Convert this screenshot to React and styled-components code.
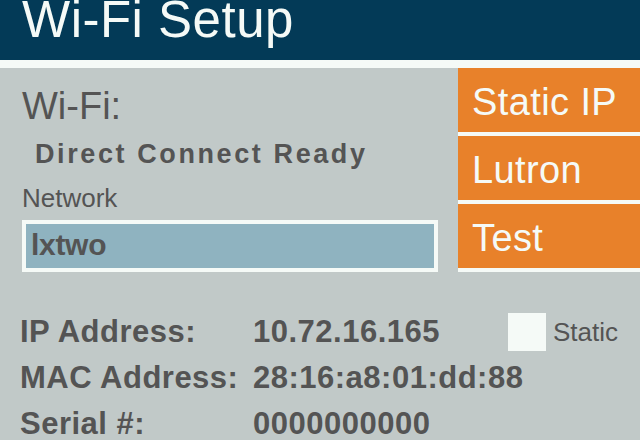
import React from "react";
import styled, { createGlobalStyle } from "styled-components";

const Global = createGlobalStyle`
  html, body { margin: 0; padding: 0; background: #c1c9c8; }
  body { font-family: "Liberation Sans", Arial, sans-serif; }
  * { box-sizing: border-box; }
`;

const Screen = styled.div`
  width: 640px;
  height: 440px;
  overflow: hidden;
  background: #c1c9c8;
  display: flex;
  flex-direction: column;
  color: #545454;
`;

const Header = styled.header`
  height: 68px;
  flex: none;
  background: #033a57;
  border-bottom: 8px solid #f5faf7;
  padding-left: 22px;
`;

const Title = styled.h1`
  margin: 0;
  font-size: 51px;
  font-weight: 400;
  line-height: 40px;
  letter-spacing: 0.5px;
  color: #f5faf7;
`;

const Top = styled.div`
  display: flex;
  height: 204px;
  flex: none;
`;

const LeftPanel = styled.section`
  width: 458px;
  padding-left: 22px;
  display: flex;
  flex-direction: column;
  align-items: flex-start;
`;

const StatusLabel = styled.div`
  margin-top: 18px;
  font-size: 38px;
  line-height: 40px;
`;

const StatusValue = styled.div`
  margin-top: 13px;
  margin-left: 13px;
  font-size: 27px;
  font-weight: 700;
  line-height: 30px;
  letter-spacing: 2.6px;
`;

const FieldLabel = styled.div`
  margin-top: 14px;
  font-size: 26px;
  line-height: 30px;
`;

const Field = styled.div`
  margin-top: 7px;
  width: 416px;
  height: 52px;
  border: 4px solid #f5faf7;
  background: #8fb3c0;
  padding-left: 5px;
  font-size: 30px;
  font-weight: 700;
  line-height: 42px;
  letter-spacing: -0.3px;
`;

const SideMenu = styled.nav`
  width: 182px;
  display: flex;
  flex-direction: column;
`;

const MenuButton = styled.div`
  height: 68px;
  background: #e8812a;
  border-bottom: 4px solid #f5faf7;
  padding: 4px 0 0 14px;
  color: #f5faf7;
  font-size: 38px;
  line-height: 60px;
  letter-spacing: 0.4px;
  white-space: nowrap;
`;

const Info = styled.section`
  padding: 37px 0 0 20px;
  display: grid;
  grid-template-columns: 233px 255px auto;
  grid-auto-rows: 46px;
  align-items: center;
`;

const InfoText = styled.div`
  font-size: 31px;
  font-weight: 700;
  line-height: 32px;
  letter-spacing: 0.5px;
  white-space: nowrap;
`;

const CheckGroup = styled.label`
  display: flex;
  align-items: center;
  gap: 7px;
`;

const CheckBox = styled.span`
  width: 38px;
  height: 38px;
  background: #f5faf7;
`;

const CheckText = styled.span`
  font-size: 26px;
  line-height: 30px;
`;

const rows = [
  ["IP Address:", "10.72.16.165", true],
  ["MAC Address:", "28:16:a8:01:dd:88", false],
  ["Serial #:", "0000000000", false],
];

export default function App() {
  return (
    <>
      <Global />
      <Screen>
        <Header>
          <Title>Wi-Fi Setup</Title>
        </Header>
        <Top>
          <LeftPanel>
            <StatusLabel>Wi-Fi:</StatusLabel>
            <StatusValue>Direct Connect Ready</StatusValue>
            <FieldLabel>Network</FieldLabel>
            <Field>lxtwo</Field>
          </LeftPanel>
          <SideMenu>
            <MenuButton>Static IP</MenuButton>
            <MenuButton>Lutron</MenuButton>
            <MenuButton>Test</MenuButton>
          </SideMenu>
        </Top>
        <Info>
          {rows.map(([label, value, check]) => (
            <React.Fragment key={label}>
              <InfoText>{label}</InfoText>
              <InfoText>{value}</InfoText>
              {check ? (
                <CheckGroup>
                  <CheckBox />
                  <CheckText>Static</CheckText>
                </CheckGroup>
              ) : (
                <span />
              )}
            </React.Fragment>
          ))}
        </Info>
      </Screen>
    </>
  );
}
